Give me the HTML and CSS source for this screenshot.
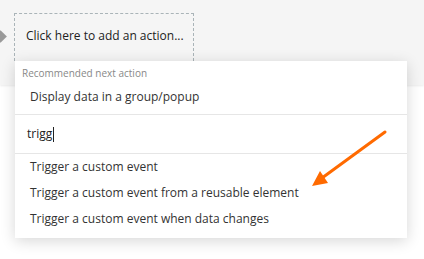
FILE: index.html
```html
<!DOCTYPE html>
<html lang="en">
<head>
    <meta charset="UTF-8">
    <meta name="viewport" content="width=device-width, initial-scale=1.0">
    <title>Workflow - Add action</title>
    <link rel="stylesheet" href="styles.css">
</head>
<body>
    <div class="canvas">
        <span class="step-arrow"></span>
        <div class="action-box">Click here to add an action...</div>
    </div>

    <div class="menu">
        <div class="menu-label">Recommended next action</div>
        <div class="menu-item">Display data in a group/popup</div>
        <div class="menu-search">trigg<span class="caret"></span></div>
        <div class="menu-results">
            <div class="menu-item">Trigger a custom event</div>
            <div class="menu-item">Trigger a custom event from a reusable element</div>
            <div class="menu-item">Trigger a custom event when data changes</div>
        </div>
    </div>

    <svg class="pointer" width="424" height="259" viewBox="0 0 424 259">
        <line x1="385" y1="132" x2="322" y2="178" stroke="#ff6a00" stroke-width="3" stroke-linecap="round"/>
        <polygon points="312,186 320,171 328,183" fill="#ff6a00"/>
    </svg>
</body>
</html>
```

FILE: styles.css
```css
* {
    margin: 0;
    padding: 0;
    box-sizing: border-box;
}
body {
    font-family: "Open Sans", Arial, sans-serif;
    background: #ffffff;
    color: #333;
    width: 424px;
    height: 259px;
    overflow: hidden;
    position: relative;
}
.canvas {
    height: 85px;
    background: #f5f5f5;
    box-shadow: 0 1px 2px rgba(0,0,0,0.08);
    padding: 13px 0 0 14px;
    position: relative;
}
.step-arrow {
    position: absolute;
    left: -4px;
    top: 32px;
    width: 9px;
    height: 9px;
    background: #999;
    transform: rotate(45deg);
}
.action-box {
    width: 180px;
    height: 48px;
    border: 1px dashed #aab4b8;
    border-bottom: none;
    font-size: 12px;
    padding: 13px 0 0 11px;
    color: #222;
}
.menu {
    position: absolute;
    left: 15px;
    top: 61px;
    width: 392px;
    height: 177px;
    background: #fff;
    box-shadow: 0 3px 14px rgba(0,0,0,0.16);
}
.menu-label {
    font-size: 10px;
    color: #888;
    padding: 5px 0 0 7px;
    height: 19px;
}
.menu-item {
    font-size: 12px;
    padding-left: 15px;
    height: 26px;
    line-height: 26px;
    color: #333;
}
.menu-label + .menu-item {
    height: 35px;
    line-height: 34px;
    border-bottom: 1px solid #e6e6e6;
}
.menu-search {
    font-size: 12px;
    padding-left: 12px;
    height: 39px;
    line-height: 38px;
    border-bottom: 1px solid #e6e6e6;
    color: #222;
}
.caret {
    display: inline-block;
    width: 1px;
    height: 15px;
    background: #222;
    vertical-align: middle;
    margin-left: 1px;
}
.pointer {
    position: absolute;
    left: 0;
    top: 0;
}
```
